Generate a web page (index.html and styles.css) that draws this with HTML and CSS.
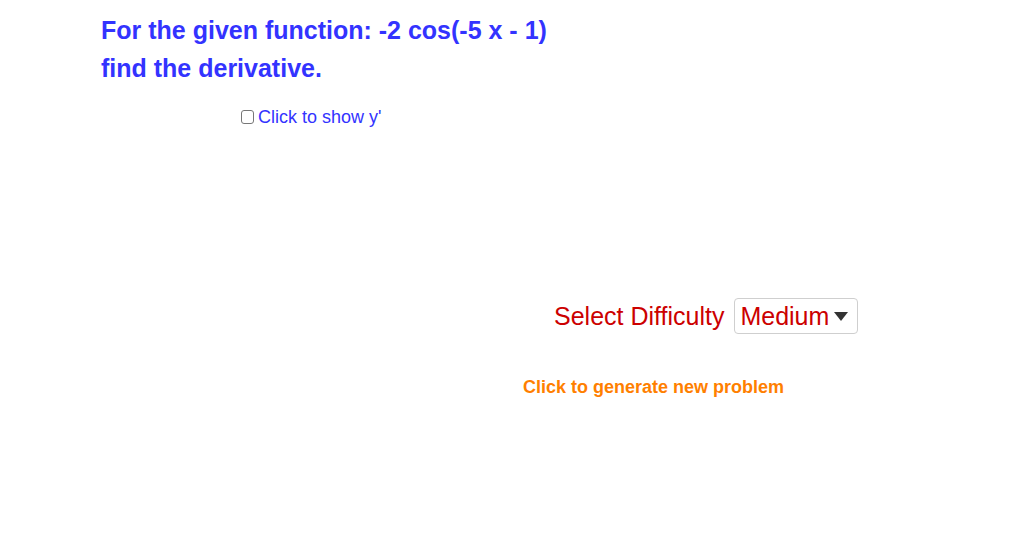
FILE: index.html
```html
<!DOCTYPE html>
<html>
<head>
<meta charset="utf-8">
<link rel="stylesheet" href="styles.css">
</head>
<body>
<div class="applet">
  <div class="title">
    <div class="line">For the given function: -2 cos(-5 x - 1)</div>
    <div class="line">find the derivative.</div>
  </div>
  <label class="show">
    <span class="box"></span><span class="show-text">Click to show y'</span>
  </label>
  <div class="difficulty">
    <span class="diff-label">Select Difficulty</span>
    <span class="select">
      <span class="select-text">Medium</span>
      <svg class="arrow" width="14" height="9" viewBox="0 0 14 9"><polygon points="0,0 14,0 7,9" fill="#333"/></svg>
    </span>
  </div>
  <div class="generate">Click to generate new problem</div>
</div>
</body>
</html>
```
FILE: styles.css
```css
html, body {
  margin: 0;
  padding: 0;
  background: #fff;
}
body {
  width: 1010px;
  height: 551px;
  overflow: hidden;
  font-family: "Liberation Sans", Arial, sans-serif;
}
.applet {
  padding-top: 11px;
}
.title {
  padding-left: 101px;
  color: #3333ff;
  font-weight: bold;
  font-size: 25px;
}
.line {
  height: 38px;
  line-height: 38px;
}
.show {
  display: flex;
  align-items: center;
  margin-left: 241px;
  margin-top: 18px;
  height: 24px;
}
.box {
  width: 11px;
  height: 12px;
  border: 1px solid #777;
  border-radius: 3px;
  margin-right: 4px;
  box-sizing: content-box;
  background: #fff;
}
.show-text {
  color: #3333ff;
  font-size: 18px;
}
.difficulty {
  display: flex;
  align-items: center;
  margin-left: 554px;
  margin-top: 168px;
  height: 38px;
}
.diff-label {
  color: #cc0000;
  font-size: 25px;
  margin-right: 10px;
}
.select {
  display: flex;
  align-items: center;
  height: 36px;
  width: 124px;
  box-sizing: border-box;
  border: 1px solid #cfcfcf;
  border-radius: 4px;
  padding-left: 5px;
}
.select-text {
  color: #cc0000;
  font-size: 25px;
}
.arrow {
  margin-left: 5px;
}
.generate {
  margin-left: 523px;
  margin-top: 42px;
  color: #ff7f00;
  font-weight: bold;
  font-size: 18px;
}
```
